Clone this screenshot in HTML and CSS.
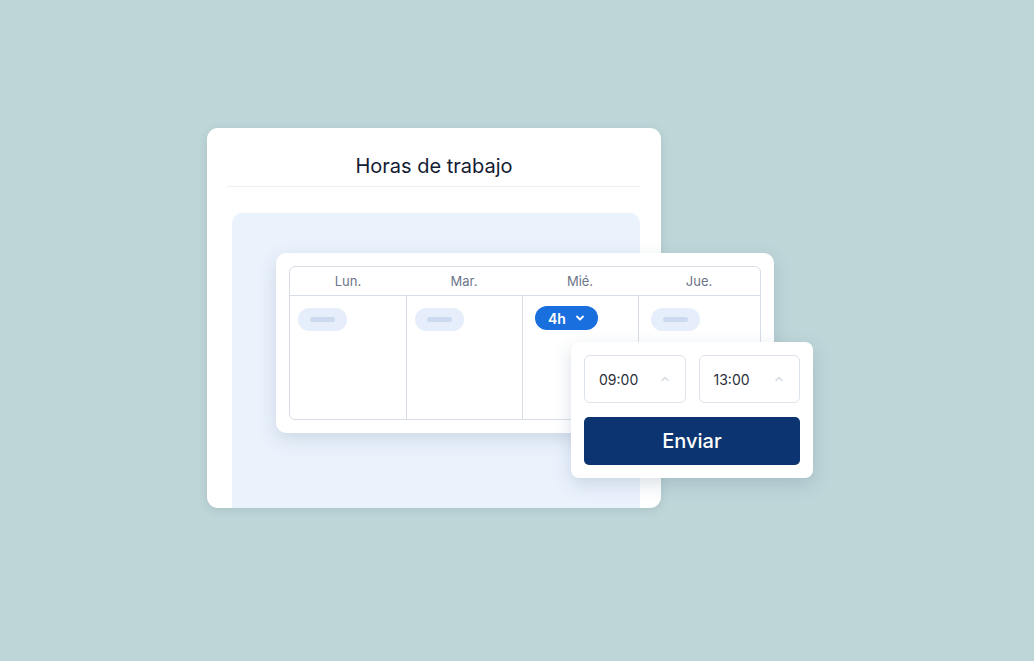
FILE: index.html
```html
<!DOCTYPE html>
<html lang="es">
<head>
    <meta charset="UTF-8">
    <meta name="viewport" content="width=device-width, initial-scale=1.0">
    <title>Horas de trabajo</title>
    <link rel="stylesheet" href="styles.css">
</head>
<body>
    <div class="scene">
        <!-- Main card -->
        <div class="card">
            <h2 class="card-title">Horas de trabajo</h2>
            <div class="panel"></div>
        </div>

        <!-- Week calendar -->
        <div class="calendar">
            <div class="week">
                <div class="day-head">Lun.</div>
                <div class="day-head">Mar.</div>
                <div class="day-head">Mié.</div>
                <div class="day-head">Jue.</div>
                <div class="day"><span class="pill"><i></i></span></div>
                <div class="day"><span class="pill"><i></i></span></div>
                <div class="day">
                    <span class="pill pill-active">4h
                        <svg width="10" height="10" viewBox="0 0 10 10"><path d="M2 3.5 L5 6.5 L8 3.5" fill="none" stroke="#fff" stroke-width="1.8" stroke-linecap="round" stroke-linejoin="round"/></svg>
                    </span>
                </div>
                <div class="day day-last"><span class="pill"><i></i></span></div>
            </div>
        </div>

        <!-- Time picker popup -->
        <div class="picker">
            <div class="times">
                <div class="time-field">
                    <span>09:00</span>
                    <svg width="12" height="12" viewBox="0 0 12 12"><path d="M3 7.5 L6 4.5 L9 7.5" fill="none" stroke="#d3dae2" stroke-width="1.4" stroke-linecap="round" stroke-linejoin="round"/></svg>
                </div>
                <div class="time-field">
                    <span>13:00</span>
                    <svg width="12" height="12" viewBox="0 0 12 12"><path d="M3 7.5 L6 4.5 L9 7.5" fill="none" stroke="#d3dae2" stroke-width="1.4" stroke-linecap="round" stroke-linejoin="round"/></svg>
                </div>
            </div>
            <button class="send-btn">Enviar</button>
        </div>
    </div>
</body>
</html>
```

FILE: styles.css
```css
body {
    margin: 0;
    padding: 0;
    height: 661px;
    overflow: hidden;
    background-color: #bed6d8;
    font-family: Inter, "Noto Sans", sans-serif;
}
.scene {
    position: relative;
    width: 454px;
    margin: 128px 0 0 207px;
}
.card {
    height: 380px;
    background: #fff;
    border-radius: 11px;
    box-shadow: 0 2px 10px rgba(60, 90, 95, 0.15);
    overflow: hidden;
    display: flex;
    flex-direction: column;
}
.card-title {
    margin: 0 20px;
    padding: 26px 0 8px;
    height: 24px;
    line-height: 24px;
    text-align: center;
    font-size: 20px;
    font-weight: 400;
    color: #141c33;
    border-bottom: 1px solid #eef1f4;
}
.panel {
    flex: 1;
    margin: 26px 21px 0 25px;
    background: #eaf2fc;
    border-radius: 10px 10px 0 0;
}
.calendar {
    position: absolute;
    left: 69px;
    top: 125px;
    width: 472px;
    padding: 13px;
    background: #fff;
    border-radius: 10px;
    box-shadow: 0 6px 18px rgba(70, 100, 130, 0.18);
}
.week {
    display: grid;
    grid-template-columns: 116px 116px 116px 1fr;
    grid-template-rows: 29px 123px;
    border: 1px solid #d8dee6;
    border-radius: 6px;
}
.day-head {
    display: flex;
    align-items: center;
    justify-content: center;
    font-size: 13px;
    color: #6c7589;
    border-bottom: 1px solid #d8dee6;
}
.day {
    padding: 10px 8px;
    border-left: 1px solid #d8dee6;
}
.day:nth-child(5) {
    border-left: none;
}
.pill {
    display: inline-flex;
    align-items: center;
    justify-content: center;
    gap: 9px;
    width: 49px;
    height: 23px;
    border-radius: 12px;
    background: #e5eefa;
}
.pill i {
    display: block;
    width: 25px;
    height: 5px;
    border-radius: 3px;
    background: #cbdaee;
}
.day-last .pill {
    margin-left: 4px;
}
.pill-active {
    margin-left: 4px;
    width: 63px;
    height: 24px;
    background: #1a6fde;
    color: #fff;
    font-size: 14px;
    font-weight: 600;
}
.picker {
    position: absolute;
    left: 364px;
    top: 214px;
    width: 216px;
    padding: 13px;
    background: #fff;
    border-radius: 8px;
    box-shadow: 0 6px 18px rgba(70, 100, 130, 0.2);
}
.times {
    display: flex;
    gap: 13px;
}
.time-field {
    flex: 1;
    height: 46px;
    display: flex;
    align-items: center;
    justify-content: space-between;
    padding: 0 14px 0 14px;
    border: 1px solid #dde3ea;
    border-radius: 6px;
    font-size: 14px;
    color: #2a2f3a;
}
.send-btn {
    display: block;
    width: 100%;
    height: 48px;
    margin-top: 14px;
    border: none;
    border-radius: 5px;
    background: #0c3470;
    color: #fff;
    font-family: Inter, "Noto Sans", sans-serif;
    font-size: 20px;
    font-weight: 500;
    cursor: pointer;
}
```
